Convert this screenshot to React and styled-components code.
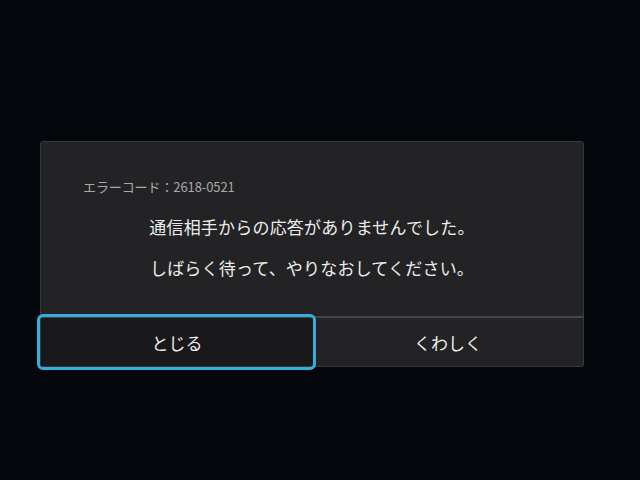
import React from "react";
import styled, { createGlobalStyle } from "styled-components";

const Global = createGlobalStyle`
  html, body { margin: 0; padding: 0; background: #04070b; }
  body { font-family: "Noto Sans CJK JP", "Noto Sans", sans-serif; }
`;

const Screen = styled.div`
  width: 640px;
  height: 480px;
  background: #04070b;
  padding: 141px 0 0 40px;
  box-sizing: border-box;
`;

const Dialog = styled.div`
  width: 544px;
  height: 226px;
  box-sizing: border-box;
  background: #232325;
  border: 1px solid #38383b;
  border-radius: 3px;
  display: flex;
  flex-direction: column;
`;

const Body = styled.div`
  height: 174px;
  box-sizing: border-box;
  padding: 36px 0 0 42px;
  display: flex;
  flex-direction: column;
`;

const Code = styled.div`
  font-size: 13px;
  line-height: 18px;
  color: #a8a8a8;
  letter-spacing: -0.1px;
`;

const Message = styled.div`
  margin-top: 19px;
  margin-left: -42px;
  display: flex;
  flex-direction: column;
  align-items: center;
  gap: 17px;
`;

const Line = styled.div`
  font-size: 17px;
  line-height: 24px;
  color: #ececec;
  letter-spacing: 0.2px;
`;

const Divider = styled.div`
  height: 2px;
  background: #454548;
`;

const Buttons = styled.div`
  flex: 1;
  display: grid;
  grid-template-columns: 272px 1fr;
`;

const Button = styled.div`
  position: relative;
  display: flex;
  align-items: center;
  justify-content: center;
  font-size: 17px;
  color: #eeeeee;
  background: ${(p) => (p.$focused ? "#19191b" : "transparent")};
  ${(p) =>
    p.$focused &&
    `
    &::after {
      content: "";
      position: absolute;
      left: -4px;
      top: -4px;
      right: -3px;
      bottom: -4px;
      border: 3px solid #35aedb;
      border-radius: 6px;
    }
  `}
`;

export default function App() {
  return (
    <>
      <Global />
      <Screen>
        <Dialog>
          <Body>
            <Code>エラーコード：2618-0521</Code>
            <Message>
              <Line>通信相手からの応答がありませんでした。</Line>
              <Line>しばらく待って、やりなおしてください。</Line>
            </Message>
          </Body>
          <Divider />
          <Buttons>
            <Button $focused>とじる</Button>
            <Button>くわしく</Button>
          </Buttons>
        </Dialog>
      </Screen>
    </>
  );
}
